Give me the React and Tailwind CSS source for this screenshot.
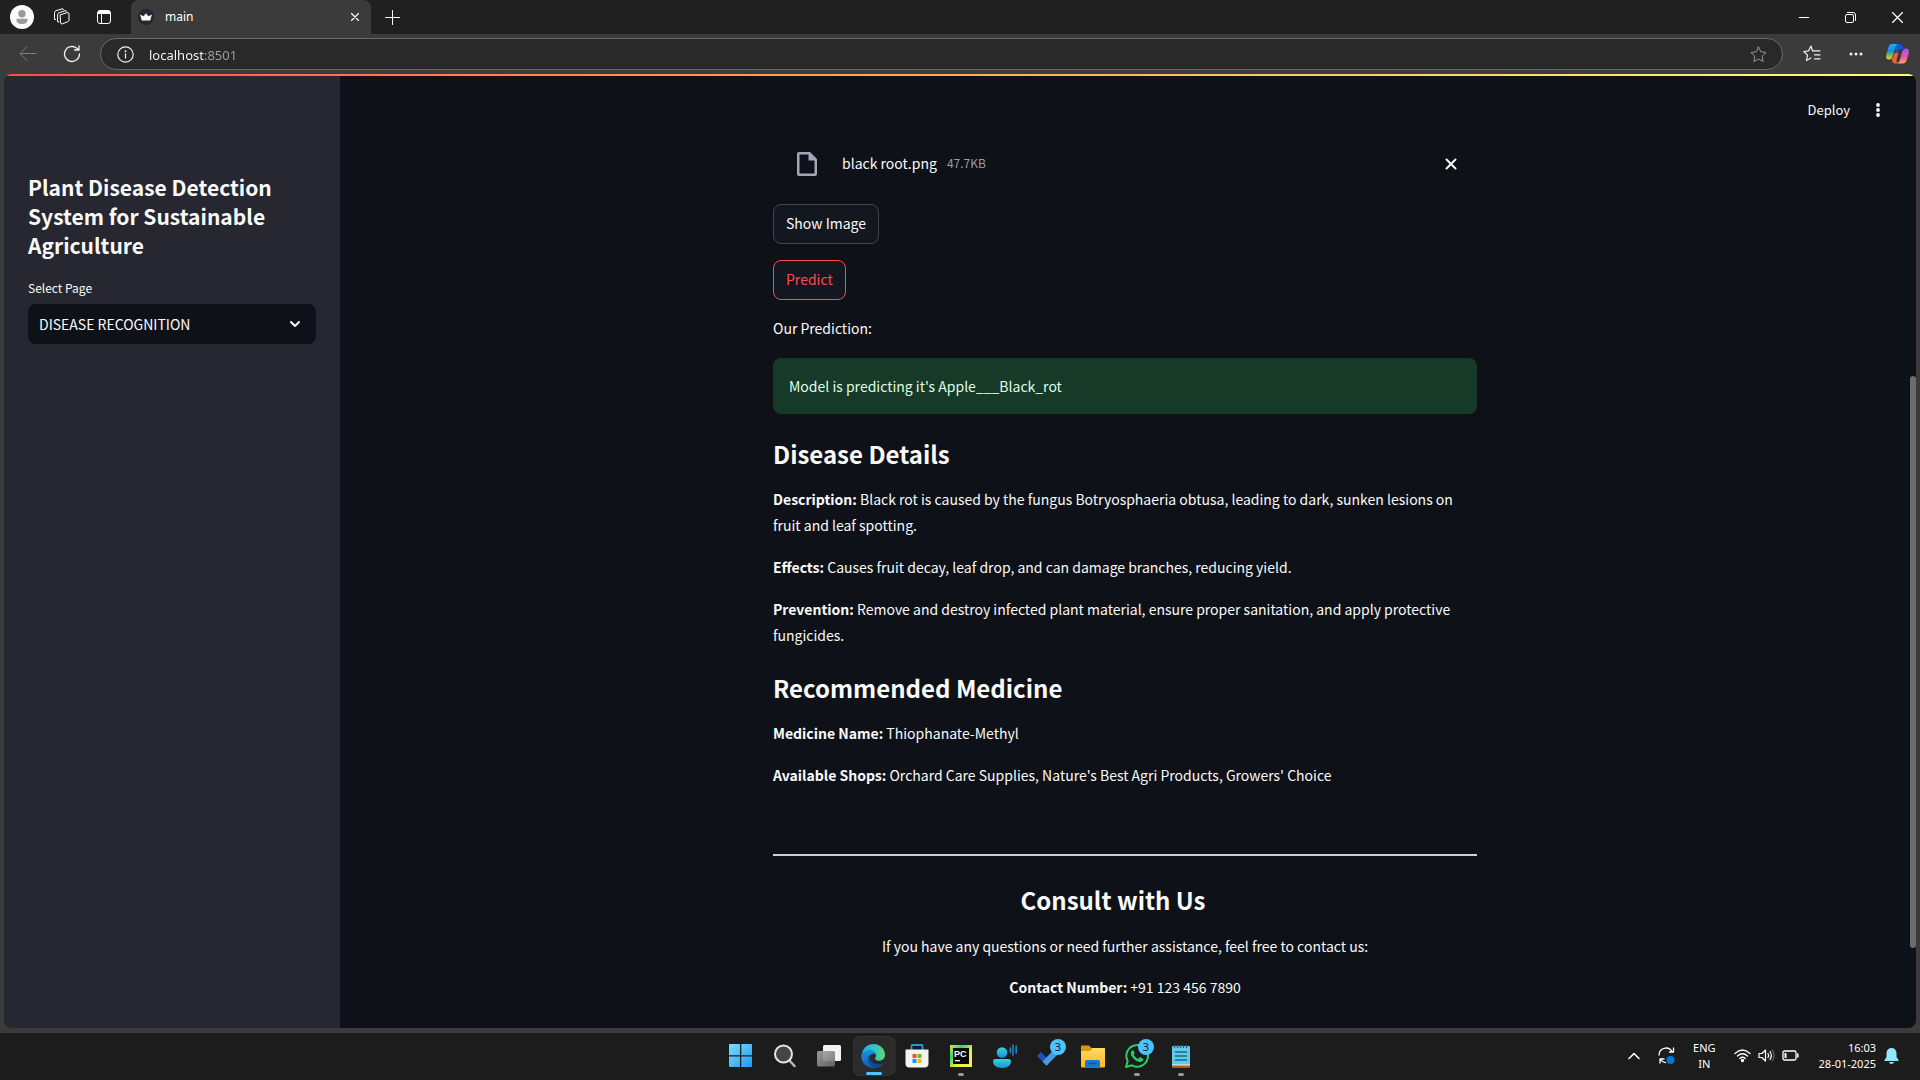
import React from "react";

const source = "font-['Noto_Sans_CJK_SC',sans-serif]";
const ui = "font-['Noto_Sans','Open_Sans',sans-serif]";

function Line({ size = 16, className = "", children, width = 1 }) {
  return (
    <svg width={size} height={size} viewBox={`0 0 ${size} ${size}`} fill="none" stroke="currentColor" strokeWidth={width} strokeLinecap="round" strokeLinejoin="round" className={`block shrink-0 ${className}`} aria-hidden="true">
      {children}
    </svg>
  );
}

function TitleBar() {
  return (
    <header className="flex h-[34px] shrink-0 bg-[#202020] text-white">
      <div className="flex w-[131px] shrink-0 items-center pl-[10px]">
        <button aria-label="Profile">
          <svg width="24" height="24" viewBox="0 0 24 24" className="block">
            <circle cx="12" cy="12" r="12" fill="#fafafa" />
            <circle cx="12" cy="8.7" r="3.7" fill="#9a9a9a" />
            <path d="M6.5 13.7h11v1.200c0 2.400-2.200 4.100-5.500 4.100s-5.500-1.700-5.500-4.100z" fill="#9a9a9a" />
          </svg>
        </button>
        <button aria-label="Workspaces" className="ml-[19px]">
          <Line size={18}>
            <path d="M7.500 6.700 14 4.700q2-.5 2 1.400v6q0 1.200-1.200 1.600L9.300 15.900Q7.500 16.300 7.500 14.500z" />
            <path d="M4.600 13.600V6.800q0-1.600 1.500-2.100L12.500 2.700M1.500 11V4.800q0-1.600 1.500-2.100L9.300.800M4.600 13.600l1.400.500M1.500 11l1.200.600M9.300.8l1.200.8M12.500 2.700l1 .6" />
          </Line>
        </button>
        <button aria-label="Tab actions" className="ml-[25px]">
          <Line size={16}>
            <rect x="1.500" y="1.500" width="13" height="13" rx="2.500" />
            <path d="M1.500 4.500h13M5.500 4.500v10" />
            <path d="M3 3h10" strokeWidth="2.500" />
          </Line>
        </button>
      </div>
      <div className="flex w-60 shrink-0 items-center rounded-t-lg bg-[#3b3b3b] pr-2 pl-[7px]">
        <svg width="16" height="16" viewBox="0 0 16 16" className="block shrink-0">
          <circle cx="8" cy="8" r="8" fill="#262730" />
          <path d="M2 5.500 5.500 7.300 8 4.200l2.500 3.100L14 5.500 12.200 11.500H3.800z" fill="#fafafa" />
        </svg>
        <span className={`ml-[11px] flex-1 text-xs ${ui}`}>main</span>
        <button aria-label="Close tab" className="p-1">
          <Line size={8} width={1.200}><path d="M.5.500l7 7M7.500.500l-7 7" /></Line>
        </button>
      </div>
      <button aria-label="New tab" className="ml-[14px]">
        <Line size={15}><path d="M7.500.500v14M.500 7.500h14" /></Line>
      </button>
      <div className="ml-auto flex items-center gap-9 pr-[17px]">
        <button aria-label="Minimize"><Line size={10}><path d="M0 5.500h10" /></Line></button>
        <button aria-label="Restore">
          <Line size={11}><rect x=".5" y="2.500" width="8" height="8" rx="1.500" /><path d="M2.500.500H8Q10.500.500 10.500 3v5.500" /></Line>
        </button>
        <button aria-label="Close window"><Line size={11} width={1.200}><path d="M.500.500l10 10M10.500.500l-10 10" /></Line></button>
      </div>
    </header>
  );
}

function Toolbar() {
  return (
    <nav className="flex h-10 shrink-0 items-center bg-[#3b3b3b] text-[#f1f1f1]">
      <button aria-label="Back" className="ml-[19px] text-[#7d7d7d]">
        <Line size={18}><path d="M17 8.500H1.500M8 1.500l-7 7 7 7" /></Line>
      </button>
      <button aria-label="Refresh" className="ml-[26px]">
        <Line size={18} width={1.300}><path d="M16.500 9A7.500 7.500 0 1 1 13.500 3l2 1.800M16 1v4h-4.500" /></Line>
      </button>
      <div className="ml-[19px] flex h-8 flex-1 items-center rounded-full border border-[#686868] bg-[#292929] pr-[15px] pl-4">
        <Line size={17} width={1.200}>
          <circle cx="8.500" cy="8.500" r="7.700" /><path d="M8.500 7.800v4.200" /><circle cx="8.500" cy="5.300" r=".4" />
        </Line>
        <label htmlFor="address" className="sr-only">Address</label>
        <input
          id="address"
          defaultValue="localhost:8501"
          className={`ml-[15px] block h-6 flex-1 bg-linear-to-r from-white from-[55px] to-[#a0a0a0] to-[55px] bg-clip-text pt-px text-[13px] text-transparent caret-white outline-none ${ui}`}
        />
        <button aria-label="Add to favorites" className="text-[#979797]">
          <Line size={17}><path d="m8.500 1 2.300 4.800 5.200.7-3.800 3.700.9 5.300-4.600-2.500-4.600 2.500.9-5.300L1 6.500l5.200-.700z" /></Line>
        </button>
      </div>
      <button aria-label="Favorites" className="ml-5">
        <Line size={18} width={1.200}><path d="M9.500 5.800H17M11.500 9.800H17M11.500 13.800H17M9.500 5.800 8 1 5.600 5.800.8 6.500 4.500 10.200l-1 5.300 4.500-2.500" /></Line>
      </button>
      <button aria-label="Settings and more" className="ml-7">
        <svg width="14" height="4" viewBox="0 0 14 4" className="block" fill="currentColor"><circle cx="2" cy="2" r="1.500" /><circle cx="7" cy="2" r="1.500" /><circle cx="12" cy="2" r="1.500" /></svg>
      </button>
      <button aria-label="Copilot" className="mr-[11px] ml-[23px]">
        <svg width="23" height="22" viewBox="0 0 23 22" className="block">
          <defs>
            <linearGradient id="cpA" x1="0" y1="0" x2="0" y2="1"><stop stopColor="#20a9f5" /><stop offset=".45" stopColor="#188fd8" /><stop offset=".75" stopColor="#7ac14f" /><stop offset="1" stopColor="#f7cc18" /></linearGradient>
            <linearGradient id="cpB" x1="0" y1="0" x2="0" y2="1"><stop stopColor="#9a58f4" /><stop offset=".55" stopColor="#e955a5" /><stop offset="1" stopColor="#fca35e" /></linearGradient>
          </defs>
          <path d="M6 1h8q2 0 2.700 2l1 3h-3q-2 0-2.600 2L11 11z" fill="#1c52d8" />
          <path d="M5.500 16q1.200-.5 1.800-2.500L8.500 10h3.800l-1.800 7q-.4 2.500 1.500 3.500H9q-2 0-2.500-2z" fill="#f3602c" />
          <path d="M5.500 1H12q-2 .8-2.700 3L6.800 13q-1 3.500-4 3.500Q-.8 16.500.3 11.500L2.500 4q1-3 3-3z" fill="url(#cpA)" />
          <path d="M17.500 20.500H11q2-.8 2.700-3L16.200 9q1-3.500 4-3.500 3.600 0 2.500 5L20.500 17.500q-1 3-3 3z" fill="url(#cpB)" />
        </svg>
      </button>
    </nav>
  );
}

function Sidebar() {
  return (
    <aside className="w-[336px] shrink-0 bg-[#262730] pt-[97px] pr-6 pl-6">
      <h1 className="text-[21px] leading-[29px] font-bold">Plant Disease Detection System for Sustainable Agriculture</h1>
      <label htmlFor="page" className="mt-[18px] block text-xs leading-5">Select Page</label>
      <div className="relative mt-1.5">
        <select id="page" defaultValue="DISEASE RECOGNITION" className="block h-10 w-full appearance-none rounded-lg bg-[#0e1117] px-[11px] text-sm">
          <option>DISEASE RECOGNITION</option>
          <option>HOME</option>
        </select>
        <Line size={12} width={2} className="pointer-events-none absolute top-3.5 right-[15px]"><path d="M2 4l4 4 4-4" /></Line>
      </div>
    </aside>
  );
}

function Detail({ label, children }) {
  return <p className="mb-4 leading-[26px]"><strong className="font-bold">{label}</strong> {children}</p>;
}

function Main() {
  return (
    <main className="relative flex-1 bg-[#0e1117] pr-[6px]">
      <div className="absolute top-0 right-[26px] flex h-[68px] items-center gap-4 text-[13px]">
        <button>Deploy</button>
        <button aria-label="Menu" className="w-6">
          <svg width="4" height="14" viewBox="0 0 4 14" className="mx-auto block" fill="currentColor"><circle cx="2" cy="2" r="1.900" /><circle cx="2" cy="7" r="1.900" /><circle cx="2" cy="12" r="1.900" /></svg>
        </button>
      </div>
      <div className="absolute top-[300px] right-0 h-[572px] w-1.5 rounded-full bg-[#6b6c70]" />
      <div className="mx-auto w-full max-w-[704px] pt-[72px] text-sm">
        <div className="flex h-8 items-center pl-6">
          <svg width="20" height="24" viewBox="0 0 20 24" className="block" fill="#a3a8b8"><path fillRule="evenodd" d="M2 0h11l7 7v15q0 2-2 2H2q-2 0-2-2V2Q0 0 2 0zm.5 2.500v19h15V8.500h-6v-6z" /></svg>
          <p className="ml-[25px] flex items-center gap-2.5 pb-0.5">
            black root.png <small className="text-xs text-[#9c9da2]">47.7KB</small>
          </p>
          <button aria-label="Remove file" className="mr-5 ml-auto"><Line size={12} width={2}><path d="M1.500 1.500l9 9M10.500 1.500l-9 9" /></Line></button>
        </div>
        <div className="mt-6 flex flex-col items-start gap-4">
          <button className="h-10 rounded-lg border border-[#41444c] bg-[#131720] px-3 pb-0.5">Show Image</button>
          <button className="h-10 rounded-lg border border-[#ff4b4b] bg-[#131720] px-3 pb-0.5 text-[#ff4b4b]">Predict</button>
          <p className="pb-0.5 leading-6">Our Prediction:</p>
        </div>
        <div role="status" className="mt-4 rounded-lg bg-[#173928] p-4 leading-6 text-[#dffde9]">Model is predicting it's Apple___Black_rot</div>
        <h2 className="mt-[23px] mb-[15px] text-2xl leading-[34px] font-bold">Disease Details</h2>
        <Detail label="Description:">Black rot is caused by the fungus Botryosphaeria obtusa, leading to dark, sunken lesions on fruit and leaf spotting.</Detail>
        <Detail label="Effects:">Causes fruit decay, leaf drop, and can damage branches, reducing yield.</Detail>
        <Detail label="Prevention:">Remove and destroy infected plant material, ensure proper sanitation, and apply protective fungicides.</Detail>
        <h2 className="mt-[23px] mb-[15px] text-2xl leading-[34px] font-bold">Recommended Medicine</h2>
        <Detail label="Medicine Name:">Thiophanate-Methyl</Detail>
        <Detail label="Available Shops:">Orchard Care Supplies, Nature's Best Agri Products, Growers' Choice</Detail>
        <hr className="mt-[66px] border-t-2 border-[#d3ced1]" />
        <section className="text-center">
          <h2 className="mt-[27px] mb-4 pr-6 text-2xl leading-[34px] font-bold">Consult with Us</h2>
          <p className="mb-[15px] leading-[26px]">If you have any questions or need further assistance, feel free to contact us:</p>
          <Detail label="Contact Number:">+91 123 456 7890</Detail>
        </section>
      </div>
    </main>
  );
}

function Badge() {
  return <span className={`absolute -top-[5px] -right-[5px] grid size-4 place-items-center rounded-full bg-[#4cc2ff] text-[11px] leading-none text-[#10202c] ${ui}`}>3</span>;
}

function TaskButton({ label, children, badge, running, active }) {
  return (
    <button aria-label={label} className={`relative grid h-10 w-10 place-items-center rounded-md pb-px ${active ? "border border-[#343434] bg-[#2b2b2b] shadow-[4px_0_0_-1px_#2b2b2b]" : ""}`}>
      <span className="relative block">
        <svg width="24" height="24" viewBox="0 0 24 24" className="block">{children}</svg>
        {badge && <Badge />}
      </span>
      {running && <span className="absolute bottom-0 left-[17px] h-[3px] w-1.5 rounded-full bg-[#9a9a9a]" />}
      {active && <span className="absolute bottom-0 left-3 h-[3px] w-4 rounded-full bg-[#4cc2ff]" />}
    </button>
  );
}

function Taskbar() {
  return (
    <footer className="grid h-[47px] shrink-0 grid-cols-[1fr_auto_1fr] items-center bg-[#1c1c1c] text-white">
      <span />
      <div className="flex gap-1 pb-px pl-0.5">
        <svg width="0" height="0" className="absolute" aria-hidden="true">
          <defs>
            <linearGradient id="win" x1="0" y1="0" x2="1" y2="1"><stop stopColor="#7bdcff" /><stop offset="1" stopColor="#1b9df0" /></linearGradient>
            <linearGradient id="edge" x1="0" y1="0" x2="1" y2="0"><stop stopColor="#2aaae6" /><stop offset=".6" stopColor="#33c6c1" /><stop offset="1" stopColor="#62dd5c" /></linearGradient>
            <linearGradient id="edgeB" x1="0" y1="0" x2="0" y2="1"><stop stopColor="#1b94de" /><stop offset="1" stopColor="#1259ad" /></linearGradient>
            <linearGradient id="person" x1="0" y1="0" x2="0" y2="1"><stop stopColor="#38d5d2" /><stop offset="1" stopColor="#1b8fe0" /></linearGradient>
            <linearGradient id="folder" x1="0" y1="0" x2="0" y2="1"><stop stopColor="#ffdb66" /><stop offset="1" stopColor="#fdb920" /></linearGradient>
            <linearGradient id="pc" x1="0" y1="0" x2="1" y2="1"><stop stopColor="#d8ee3a" /><stop offset=".3" stopColor="#35d66d" /><stop offset=".6" stopColor="#e8f03b" /><stop offset="1" stopColor="#f5f053" /></linearGradient>
            <linearGradient id="glass" x1="0" y1="0" x2="1" y2="1"><stop stopColor="#a8a8a8" /><stop offset="1" stopColor="#6a6a6a" /></linearGradient>
          </defs>
        </svg>
        <TaskButton label="Start"><path d="M1 0h10v11.300H0V1q0-1 1-1zM12.300 0H22q1 0 1 1v10.300H12.300zM0 12.500h11V23H1q-1 0-1-1zM12.300 12.500H23V22q0 1-1 1h-9.700z" fill="url(#win)" /></TaskButton>
        <TaskButton label="Search"><path d="M16 16l5.500 6" stroke="#b9b9b9" strokeWidth="2.500" strokeLinecap="round" /><circle cx="10.500" cy="10" r="8.500" fill="#454545" stroke="#e5e5e5" strokeWidth="2" /></TaskButton>
        <TaskButton label="Task view"><rect x="6" y="1" width="18" height="16" rx="1.500" fill="#f4f4f4" /><rect y="7" width="18" height="15.500" rx="1.500" fill="url(#glass)" fillOpacity=".9" /></TaskButton>
        <TaskButton label="Edge" active>
          <path d="M1 9.500C2.300 3.800 6.600 0 12.200 0 19 0 24 5 24 10.800c0 3.700-2.700 6-6 6-2.600 0-4.300-1-4-2.200.3-1 1-1.400 1-3 0-2.500-2.300-4.600-5.700-4.600C5.800 7 2.500 8.700 1 9.500z" fill="url(#edge)" />
          <path d="M.3 10.500C2 7.700 5.300 6 9 6c3.500 0 5.800 2.300 5.900 5-1-1.200-3-1.600-4.500-.5-3 2.300-1.700 8 3.600 9.800 3 1 6 .3 8-.8-2.500 3.400-6 4.500-9.500 4.500C5 24-.8 17.500.3 10.500z" fill="url(#edgeB)" />
          <path d="M7 14c-.4 5 3 9 7.500 9.500 3 0 6-1.500 7.700-4-6 2.400-12 .8-13-5-.5-2 .2-3.500 1-4.200C8.500 11 7.200 12.500 7 14z" fill="#0c4b96" />
        </TaskButton>
        <TaskButton label="Microsoft Store">
          <path d="M6.500 6V2q0-1 1-1h9q1 0 1 1v4" fill="none" stroke="#1c9be0" strokeWidth="1.800" />
          <path d="M.5 5.500h23v14q0 4-4 4h-15q-4 0-4-4z" fill="#f3f3f3" />
          <path d="M7.500 10h4v4h-4z" fill="#f05125" /><path d="M12.500 10h4v4h-4z" fill="#7eb900" /><path d="M7.500 15h4v4h-4z" fill="#00a3ee" /><path d="M12.500 15h4v4h-4z" fill="#fdb809" />
        </TaskButton>
        <TaskButton label="PyCharm" running>
          <rect x="1" y="1" width="22" height="22" fill="url(#pc)" /><rect x="4" y="4" width="16" height="16" fill="#070707" />
          <text x="5" y="12.500" fontSize="9" fontWeight="700" fill="#fff" fontFamily="Liberation Sans, sans-serif">PC</text><path d="M6 16h5v1.300H6z" fill="#fff" />
        </TaskButton>
        <TaskButton label="Voice access">
          <circle cx="9" cy="8.500" r="5.300" fill="url(#person)" /><path d="M2.500 15h13q2.500 0 2.500 2.500 0 6.500-9 6.500t-9-6.500Q0 15 2.500 15z" fill="url(#person)" />
          <path d="M17.300 4v4.500M20 1v10M23.200 2v7" stroke="#1d86ce" strokeWidth="1.600" strokeLinecap="round" />
        </TaskButton>
        <TaskButton label="To Do" badge><path d="M0 12l4-4 6 6-.5 7.800z" fill="#1c52b0" /><path d="M5.500 17.500 18.500 4l4.500 4L9.500 21.800z" fill="#429bea" /></TaskButton>
        <TaskButton label="File Explorer">
          <path d="M0 2.500q0-1 1-1h7l2.500 2.500H23q1 0 1 1V9H0z" fill="#dc9512" /><path d="M0 7h9l2.500-3H23q1 0 1 1v17.500q0 1-1 1H1q-1 0-1-1z" fill="url(#folder)" />
          <path d="M4 23.500V18q0-2 2-2h11q2 0 2 2v5.500z" fill="#117bd0" /><path d="M8 19.500h7" stroke="#0a569c" strokeWidth="1.300" strokeLinecap="round" />
        </TaskButton>
        <TaskButton label="WhatsApp" running badge>
          <path d="M1 23l1.700-6A10.800 10.800 0 1 1 7 21.300z" fill="#1c1c1c" stroke="#27cf62" strokeWidth="2" strokeLinejoin="round" />
          <path d="M8.300 6.300q-.9-.2-1.700.7C4.600 9.300 6.500 12.500 9 15c3 2.800 6 4 8.300 2.300 1.100-.8 1.100-2 .9-2.500l-3-1.500q-.5-.2-1 .4l-1 1.200c-2-.7-3.700-2.300-4.600-4.100l.9-1.200q.3-.4.100-.9z" fill="#27cf62" />
        </TaskButton>
        <TaskButton label="Notepad" running>
          <path d="M3 19h18v4q0 1-1 1H4q-1 0-1-1z" fill="#b3590e" /><path d="M3 19h18v2.500H3z" fill="#f0f0f0" /><rect x="3" y="2" width="18" height="18.500" rx="1" fill="#63c9e8" />
          <path d="M5.500 1v3M8.500 1v3M11.500 1v3M14.500 1v3M17.500 1v3" stroke="#176782" strokeWidth="1.300" /><path d="M6.500 8h11M6.500 12h11M6.500 16h11" stroke="#176782" strokeWidth="1.500" strokeLinecap="round" />
        </TaskButton>
      </div>
      <div className={`flex items-center justify-end pr-[21px] pb-0.5 text-[11px] leading-4 ${ui}`}>
        <button aria-label="Hidden icons"><Line size={12} width={1.500}><path d="M1 8.500l5-5 5 5" /></Line></button>
        <button aria-label="Updates" className="ml-[18px]">
          <Line size={17} width={1.300}><path d="M1 8A7 7 0 0 1 14 4.500M15.500 1v4h-4M6 12H2v4M2.500 12.500q2 3 5 3.200" /><circle cx="12.500" cy="13" r="4" fill="#0078d7" stroke="none" /></Line>
        </button>
        <button aria-label="Keyboard language" className="ml-[18px] text-center">ENG<br />IN</button>
        <button aria-label="Network, volume and battery" className="ml-[18px] flex items-center gap-[7px]">
          <Line size={17} width={1.300}><path d="M1 6.500q7.500-7 15 0M3.500 9q5-4.500 10 0M5.800 11.500q2.700-2.400 5.400 0" /><circle cx="8.500" cy="13.500" r="1" fill="currentColor" /></Line>
          <Line size={17} width={1.200}><path d="M1 6.500v4h3l3.500 3.500V3L4 6.500zM10 6.500q1.200 2 0 4M12 4.500q2.700 4 0 8" /><path d="M14.300 3q3.500 5.500 0 11" stroke="#666" /></Line>
          <Line size={17} width={1.300}><rect x="1" y="4" width="13" height="9" rx="1.500" /><path d="M3.500 6v5" strokeWidth="2" strokeLinecap="butt" /><path d="M15.800 7v3" strokeWidth="1.500" /></Line>
        </button>
        <button className="ml-5 text-right">16:03<br />28-01-2025</button>
        <button aria-label="Notifications" className="ml-2">
          <svg width="15" height="16" viewBox="0 0 15 16" className="block" fill="#94e6fd"><path d="M7.500 0a5 5 0 0 1 5 5v4l2 3v1H.5v-1l2-3V5a5 5 0 0 1 5-5zM5 14h5q-.7 2-2.500 2T5 14z" /></svg>
        </button>
      </div>
    </footer>
  );
}

export default function App() {
  return (
    <div className="flex min-h-screen flex-col bg-[#3b3b3b]">
      <TitleBar />
      <Toolbar />
      <div className={`mx-1 mb-[5px] flex flex-1 flex-col overflow-hidden rounded-lg text-[#fafafa] ${source}`}>
        <div className="h-0.5 bg-linear-to-r from-[#ff4b4b] to-[#fffd80]" />
        <div className="flex flex-1"><Sidebar /><Main /></div>
      </div>
      <Taskbar />
    </div>
  );
}
